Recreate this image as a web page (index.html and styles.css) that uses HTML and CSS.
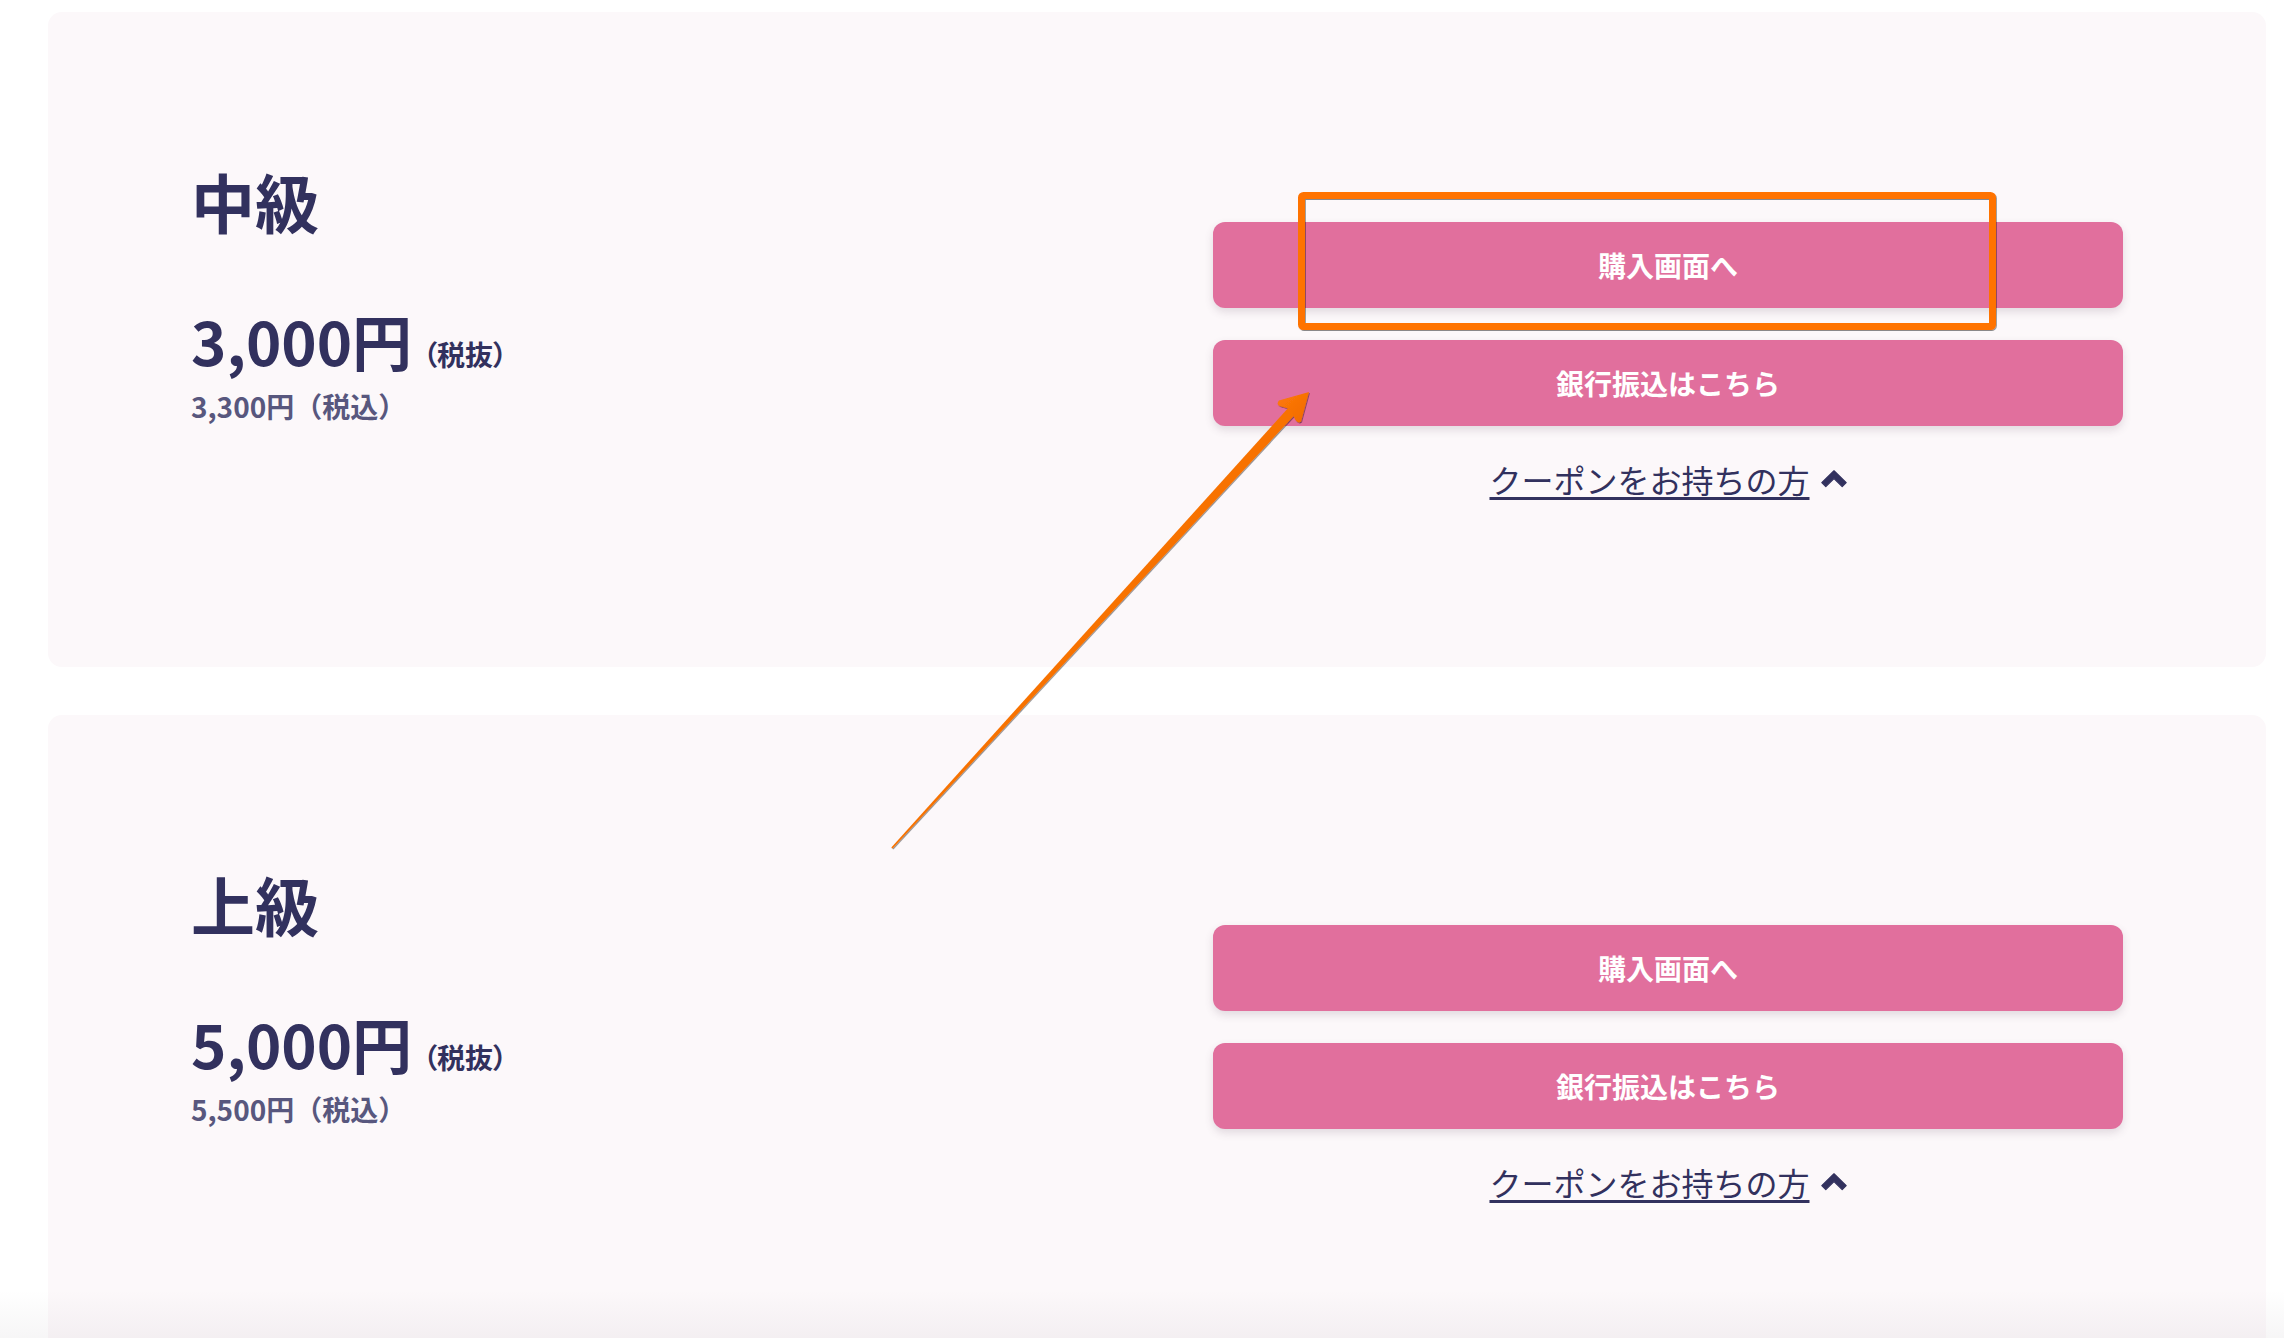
FILE: index.html
```html
<!DOCTYPE html>
<html lang="ja">
<head>
<meta charset="utf-8">
<title>プラン</title>
<link rel="stylesheet" href="styles.css">
</head>
<body>
<div class="page">
  <section class="plan">
    <div class="plan-info">
      <h2 class="plan-name">中級</h2>
      <p class="price"><span class="price-main">3,000円</span><span class="price-note">（税抜）</span></p>
      <p class="price-sub">3,300円（税込）</p>
    </div>
    <div class="plan-actions">
      <a class="btn" href="#">購入画面へ</a>
      <a class="btn" href="#">銀行振込はこちら</a>
      <a class="coupon" href="#"><span class="coupon-text">クーポンをお持ちの方</span><svg class="chev" viewBox="0 0 26 18" aria-hidden="true"><polygon points="13,0.8 25.2,12.6 21.2,16.6 13,8.6 4.8,16.6 0.8,12.6"/></svg></a>
    </div>
  </section>
  <section class="plan">
    <div class="plan-info">
      <h2 class="plan-name">上級</h2>
      <p class="price"><span class="price-main">5,000円</span><span class="price-note">（税抜）</span></p>
      <p class="price-sub">5,500円（税込）</p>
    </div>
    <div class="plan-actions">
      <a class="btn" href="#">購入画面へ</a>
      <a class="btn" href="#">銀行振込はこちら</a>
      <a class="coupon" href="#"><span class="coupon-text">クーポンをお持ちの方</span><svg class="chev" viewBox="0 0 26 18" aria-hidden="true"><polygon points="13,0.8 25.2,12.6 21.2,16.6 13,8.6 4.8,16.6 0.8,12.6"/></svg></a>
    </div>
  </section>
</div>

<svg class="annotation" viewBox="0 0 2284 1338" aria-hidden="true">
  <defs>
    <filter id="sh" x="-5%" y="-5%" width="110%" height="110%">
      <feDropShadow dx="0.8" dy="1" stdDeviation="0.6" flood-color="#000" flood-opacity="0.45"/>
    </filter>
    <linearGradient id="ag" x1="0" y1="0" x2="1" y2="1">
      <stop offset="0" stop-color="#ff7a0a"/>
      <stop offset="1" stop-color="#f06a00"/>
    </linearGradient>
  </defs>
  <rect x="1301.5" y="195.5" width="691" height="131" rx="2" fill="none" stroke="#ff7300" stroke-width="7" filter="url(#sh)"/>
  <g filter="url(#sh)" fill="url(#ag)">
    <polygon points="892.5,848.5 891.3,847.4 1289,407 1296,413.5"/>
    <path d="M1309,392 L1279,400.5 Q1276,404 1279.5,406 L1290,409 L1295.5,420 Q1298,424 1301,421.5 Z"/>
  </g>
</svg>
<div class="bottom-fade"></div>
</body>
</html>
```

FILE: styles.css
```css
html, body {
  margin: 0;
  padding: 0;
  background: #ffffff;
}

body {
  width: 2284px;
  height: 1338px;
  overflow: hidden;
  position: relative;
  font-family: "Noto Sans CJK JP", "Noto Sans", sans-serif;
  color: #32315e;
}

.page {
  padding: 12px 18px 0 48px;
  display: flex;
  flex-direction: column;
  gap: 48px;
}

.plan {
  background: #fcf8fa;
  border-radius: 14px;
  height: 655px;
  flex: 0 0 auto;
  padding: 0 143px;
  display: grid;
  grid-template-columns: 1fr 910px;
  box-sizing: border-box;
}

.plan-info {
  padding-top: 156px;
}

.plan-name {
  margin: 0;
  font-size: 64px;
  line-height: 64px;
  font-weight: 700;
  color: #32315e;
}

.price {
  margin: 78px 0 0;
  display: flex;
  align-items: baseline;
  white-space: nowrap;
}

.price-main {
  font-size: 60px;
  line-height: 60px;
  font-weight: 700;
  color: #32315e;
}

.price-note {
  font-size: 28px;
  line-height: 28px;
  font-weight: 700;
  margin-left: 11px;
  font-feature-settings: "palt";
  color: #32315e;
}

.price-sub {
  margin: 22px 0 0;
  font-size: 28px;
  line-height: 28px;
  font-weight: 700;
  color: #58577e;
}

.plan-actions {
  padding-top: 210px;
  display: flex;
  flex-direction: column;
  gap: 32px;
}

.btn {
  display: flex;
  align-items: center;
  justify-content: center;
  height: 86px;
  border-radius: 12px;
  background: #e16f9d;
  color: #ffffff;
  font-size: 28px;
  font-weight: 700;
  text-decoration: none;
  box-shadow: 0 4px 9px rgba(90, 60, 90, 0.16);
}

.coupon {
  margin-top: 5px;
  display: flex;
  align-items: center;
  justify-content: center;
  gap: 11px;
  font-size: 32px;
  line-height: 32px;
  color: #32315e;
  text-decoration: none;
}

.coupon-text {
  text-decoration: underline;
  text-decoration-thickness: 3px;
  text-underline-offset: 4px;
}

.chev {
  width: 26px;
  height: 18px;
  fill: #32315e;
  stroke: #32315e;
  stroke-width: 1.2;
  stroke-linejoin: round;
}

.annotation {
  position: absolute;
  left: 0;
  top: 0;
  width: 2284px;
  height: 1338px;
  pointer-events: none;
}

.bottom-fade {
  position: absolute;
  left: 0;
  right: 0;
  bottom: 0;
  height: 48px;
  background: linear-gradient(to bottom, rgba(0, 0, 0, 0), rgba(60, 40, 60, 0.045));
  pointer-events: none;
}
```
